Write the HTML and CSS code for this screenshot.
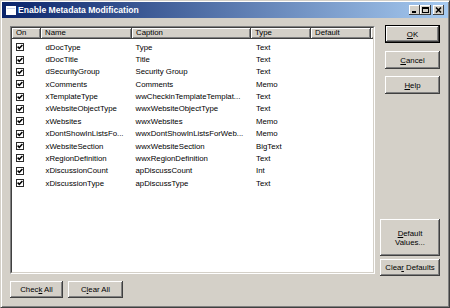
FILE: index.html
```html
<!DOCTYPE html>
<html>
<head>
<meta charset="utf-8">
<link rel="stylesheet" href="styles.css">
</head>
<body>
<div class="window">
  <div class="titlebar">
    <svg class="app-icon" width="10" height="9" viewBox="0 0 10 9"><rect x="0" y="0" width="10" height="9" fill="#fff"/><rect x="1" y="2" width="8" height="1" fill="#c8d4ec"/></svg>
    <span class="title">Enable Metadata Modification</span>
    <div class="caption-btns">
      <span class="cbtn"><svg width="11" height="10" viewBox="0 0 11 10"><rect x="3" y="6" width="4" height="2" fill="#000"/></svg></span>
      <span class="cbtn"><svg width="11" height="10" viewBox="0 0 11 10"><rect x="2.5" y="2.5" width="6" height="5" fill="none" stroke="#000"/><rect x="2" y="2" width="7" height="2" fill="#000"/></svg></span>
      <span class="cbtn close"><svg width="11" height="10" viewBox="0 0 11 10"><path d="M3 2.5 L8 7.5 M8 2.5 L3 7.5" stroke="#000" stroke-width="1.6"/></svg></span>
    </div>
  </div>
  <div class="content">
    <div class="list">
      <div class="list-inner">
        <div class="header">
          <div class="hcell col-on">On</div>
          <div class="hcell col-name">Name</div>
          <div class="hcell col-caption">Caption</div>
          <div class="hcell col-type">Type</div>
          <div class="hcell col-default">Default</div>
          <div class="hcell col-rest"></div>
        </div>
        <div class="rows">
          <div class="row"><div class="cell col-on"><span class="chk"></span></div><div class="cell col-name">dDocType</div><div class="cell col-caption">Type</div><div class="cell col-type">Text</div></div>
          <div class="row"><div class="cell col-on"><span class="chk"></span></div><div class="cell col-name">dDocTitle</div><div class="cell col-caption">Title</div><div class="cell col-type">Text</div></div>
          <div class="row"><div class="cell col-on"><span class="chk"></span></div><div class="cell col-name">dSecurityGroup</div><div class="cell col-caption">Security Group</div><div class="cell col-type">Text</div></div>
          <div class="row"><div class="cell col-on"><span class="chk"></span></div><div class="cell col-name">xComments</div><div class="cell col-caption">Comments</div><div class="cell col-type">Memo</div></div>
          <div class="row"><div class="cell col-on"><span class="chk"></span></div><div class="cell col-name">xTemplateType</div><div class="cell col-caption">wwCheckinTemplateTemplat...</div><div class="cell col-type">Text</div></div>
          <div class="row"><div class="cell col-on"><span class="chk"></span></div><div class="cell col-name">xWebsiteObjectType</div><div class="cell col-caption">wwxWebsiteObjectType</div><div class="cell col-type">Text</div></div>
          <div class="row"><div class="cell col-on"><span class="chk"></span></div><div class="cell col-name">xWebsites</div><div class="cell col-caption">wwxWebsites</div><div class="cell col-type">Memo</div></div>
          <div class="row"><div class="cell col-on"><span class="chk"></span></div><div class="cell col-name">xDontShowInListsFo...</div><div class="cell col-caption">wwxDontShowInListsForWeb...</div><div class="cell col-type">Memo</div></div>
          <div class="row"><div class="cell col-on"><span class="chk"></span></div><div class="cell col-name">xWebsiteSection</div><div class="cell col-caption">wwxWebsiteSection</div><div class="cell col-type">BigText</div></div>
          <div class="row"><div class="cell col-on"><span class="chk"></span></div><div class="cell col-name">xRegionDefinition</div><div class="cell col-caption">wwxRegionDefinition</div><div class="cell col-type">Text</div></div>
          <div class="row"><div class="cell col-on"><span class="chk"></span></div><div class="cell col-name">xDiscussionCount</div><div class="cell col-caption">apDiscussCount</div><div class="cell col-type">Int</div></div>
          <div class="row"><div class="cell col-on"><span class="chk"></span></div><div class="cell col-name">xDiscussionType</div><div class="cell col-caption">apDiscussType</div><div class="cell col-type">Text</div></div>
        </div>
      </div>
    </div>
    <div class="side">
      <button class="btn btn-default btn-small"><span><u>O</u>K</span></button>
      <button class="btn btn-small btn-cancel"><span><u>C</u>ancel</span></button>
      <button class="btn btn-small btn-help"><span><u>H</u>elp</span></button>
      <div class="spacer"></div>
      <button class="btn btn-wide btn-tall"><span><u>D</u>efault<br>Values...</span></button>
      <button class="btn btn-wide btn-clear-def"><span>Clea<u>r</u> Defaults</span></button>
    </div>
    <div class="bottom">
      <button class="btn btn-check"><span>Chec<u>k</u> All</span></button>
      <button class="btn btn-clearall"><span>C<u>l</u>ear All</span></button>
    </div>
  </div>
</div>
</body>
</html>
```
FILE: styles.css
```css
* { box-sizing: border-box; }
html, body { margin: 0; padding: 0; }
body {
  font-family: "Liberation Sans", Arial, sans-serif;
  font-size: 7.8px;
  color: #000;
  background: #d4d0c8;
}
.window {
  width: 450px;
  height: 308px;
  background: #d4d0c8;
  border: 1px solid;
  border-color: #d4d0c8 #404040 #404040 #d4d0c8;
  box-shadow: inset 1px 1px #fff, inset -1px -1px #808080;
  padding: 1px;
  display: flex;
  flex-direction: column;
}
.titlebar {
  height: 16px;
  background: linear-gradient(to right, #0a246a, #a6caf0);
  display: flex;
  align-items: center;
  padding: 0 4px 0 4px;
}
.app-icon { flex: none; margin-right: 2px; }
.title {
  color: #fff;
  font-weight: bold;
  font-size: 8.6px;
  white-space: nowrap;
}
.caption-btns {
  margin-left: auto;
  display: flex;
  align-items: center;
}
.cbtn {
  width: 11px;
  height: 10px;
  background: #d4d0c8;
  box-shadow: inset -1px -1px #404040, inset 1px 1px #fff;
  display: block;
}
.cbtn svg { display: block; }
.cbtn.close { margin-left: 2px; }

.content {
  flex: 1;
  display: grid;
  grid-template-columns: 365px 60px;
  grid-template-rows: 248px 17px;
  column-gap: 5px;
  row-gap: 7px;
  padding: 8px 0 0 8px;
}
.list {
  border: 1px solid;
  border-color: #808080 #fff #fff #808080;
  background: #fff;
}
.list-inner {
  height: 100%;
  border: 1px solid;
  border-color: #404040 #d4d0c8 #d4d0c8 #404040;
  background: #fff;
  overflow: hidden;
}
.header {
  display: flex;
  height: 11px;
  background: #d4d0c8;
}
.hcell {
  height: 11px;
  line-height: 10px;
  padding-left: 4px;
  white-space: nowrap;
  box-shadow: inset 1px 1px #fff, inset -1px -1px #808080;
  border-right: 1px solid #404040;
  border-bottom: 1px solid #404040;
}
.col-on { width: 29px; flex: none; }
.col-name { width: 91px; flex: none; }
.col-caption { width: 119px; flex: none; }
.col-type { width: 60px; flex: none; }
.col-default { width: 60px; flex: none; }
.col-rest { flex: 1; }
.rows { padding-top: 2px; }
.row {
  height: 12.36px;
  display: flex;
  align-items: center;
}
.cell {
  padding-left: 4px;
  white-space: nowrap;
  overflow: hidden;
}
.cell.col-name { padding-left: 4.5px; }
.cell.col-caption { padding-left: 3.5px; }
.cell.col-type { padding-left: 5px; }
.chk {
  display: block;
  width: 8px;
  height: 8px;
  border: 1px solid #2a2a2a;
  background: #fff url("data:image/svg+xml;utf8,<svg xmlns='http://www.w3.org/2000/svg' width='6' height='6' viewBox='0 0 6 6'><path d='M0.6 2.6 L2.3 4.3 L5.4 1' fill='none' stroke='black' stroke-width='1.5'/></svg>") no-repeat center;
}

.side {
  grid-column: 2;
  grid-row: 1;
  margin-top: -1px;
  margin-bottom: -2px;
  display: flex;
  flex-direction: column;
  align-items: flex-end;
}
.spacer { flex: 1; }
.btn {
  appearance: none;
  -webkit-appearance: none;
  margin: 0;
  padding: 0;
  border: none;
  font: inherit;
  color: #000;
  background: #d4d0c8;
  box-shadow: inset -1px -1px #404040, inset 1px 1px #fff, inset -2px -2px #808080;
  display: flex;
  align-items: center;
  justify-content: center;
  text-align: center;
  line-height: 9px;
  white-space: nowrap;
}
.btn span { display: block; }
.btn u { text-decoration-thickness: 1px; text-underline-offset: 1px; }
.btn-small { width: 55px; height: 18px; }
.btn-default {
  border: 1px solid #000;
  box-shadow: inset -1px -1px #404040, inset 1px 1px #fff, inset -2px -2px #808080;
}
.btn-cancel { margin-top: 8px; }
.btn-help { margin-top: 7px; }
.btn-wide { width: 60px; }
.btn-tall { height: 37px; }
.btn-clear-def { height: 17px; margin-top: 3px; }

.bottom {
  grid-column: 1;
  grid-row: 2;
  display: flex;
  gap: 5px;
}
.btn-check { width: 53px; height: 17px; }
.btn-clearall { width: 55px; height: 17px; }
```
